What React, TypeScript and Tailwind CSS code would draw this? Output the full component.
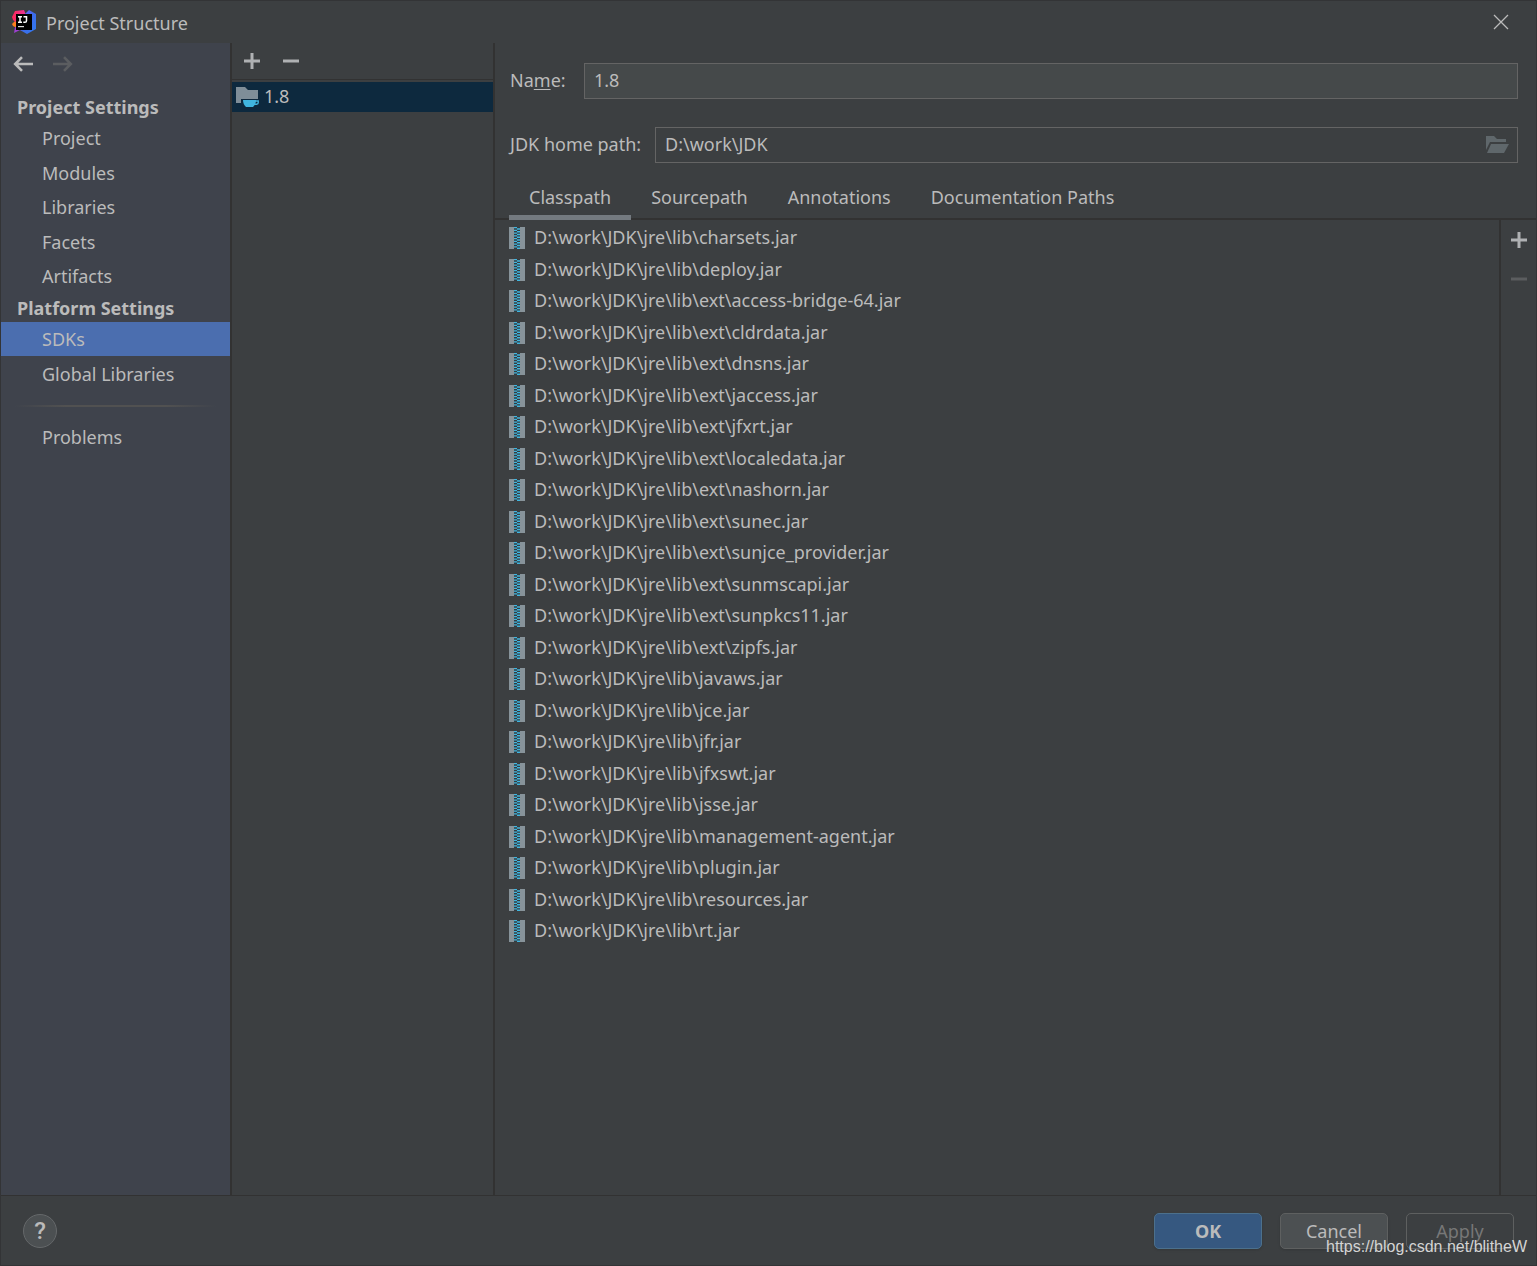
import type { InputHTMLAttributes } from "react";

const projectItems = ["Project", "Modules", "Libraries", "Facets", "Artifacts"];
const platformItems = ["SDKs", "Global Libraries"];
const tabs = ["Classpath", "Sourcepath", "Annotations", "Documentation Paths"];

const jars = [
  "charsets.jar",
  "deploy.jar",
  "ext\\access-bridge-64.jar",
  "ext\\cldrdata.jar",
  "ext\\dnsns.jar",
  "ext\\jaccess.jar",
  "ext\\jfxrt.jar",
  "ext\\localedata.jar",
  "ext\\nashorn.jar",
  "ext\\sunec.jar",
  "ext\\sunjce_provider.jar",
  "ext\\sunmscapi.jar",
  "ext\\sunpkcs11.jar",
  "ext\\zipfs.jar",
  "javaws.jar",
  "jce.jar",
  "jfr.jar",
  "jfxswt.jar",
  "jsse.jar",
  "management-agent.jar",
  "plugin.jar",
  "resources.jar",
  "rt.jar",
];

const Logo = () => (
  <svg className="size-6" viewBox="0 0 24 24" aria-hidden="true">
    <defs>
      <linearGradient id="logo-blue" x1="0" y1="0" x2="1" y2="1">
        <stop offset="0" stopColor="#7a5cff" />
        <stop offset="0.5" stopColor="#3d6bea" />
        <stop offset="1" stopColor="#2f7bf0" />
      </linearGradient>
      <linearGradient id="logo-pink" x1="0" y1="0" x2="1" y2="0">
        <stop offset="0" stopColor="#fe2857" />
        <stop offset="1" stopColor="#e8359a" />
      </linearGradient>
    </defs>
    <path d="M0 14l5-5v9l-4-2z" fill="#fc801d" />
    <path d="M3 17h8l3 5-6-2-6 3z" fill="#9d3fd0" />
    <path d="M3 1l9-1 2 5-9 8-4-3-1-3z" fill="url(#logo-pink)" />
    <path d="M13 4l4-4 7 4v15l-9 5-7-4z" fill="url(#logo-blue)" />
    <path d="M4 4h16v16H4z" fill="#000" />
    <path
      d="M6 6.700h4M8 6.700v5.600M6 12.300h4M11.500 6.700h3v4q0 1.600-1.600 1.600h-1.600"
      fill="none"
      stroke="#fff"
      strokeWidth="1.500"
    />
    <path d="M6 16h6v1.200H6z" fill="#ddd" />
  </svg>
);

const ArrowIcon = () => (
  <svg className="size-6" viewBox="0 0 24 24" fill="none" stroke="currentColor" strokeWidth="2.600">
    <path d="M22 12H4M11 5.200L4.200 12l6.800 6.800" />
  </svg>
);

const PlusIcon = () => (
  <svg className="size-4" viewBox="0 0 16 16" fill="currentColor">
    <path d="M6.500 0h3v6.500H16v3H9.500V16h-3V9.500H0v-3h6.500z" />
  </svg>
);

const MinusIcon = () => (
  <svg className="size-4" viewBox="0 0 16 16" fill="currentColor">
    <path d="M0 6.500h16v3H0z" />
  </svg>
);

const SdkIcon = () => (
  <svg className="size-6" viewBox="0 0 24 24" aria-hidden="true">
    <path d="M0 2h9l3 3h10v9H5v4H0z" fill="#7f8e98" />
    <path d="M7 15h13c0 3-1 5-3 7h-7c-2-2-3-4-3-7z" fill="#40b6e0" />
    <path d="M18 16h4.200v1.800q0 1.400-1.600 1.400H18" fill="none" stroke="#40b6e0" strokeWidth="1.400" />
  </svg>
);

const JarIcon = () => (
  <svg className="h-[22px] w-4 shrink-0" viewBox="0 0 16 22" aria-hidden="true">
    <path d="M0 0h5v22H0zM11 0h5v22h-5z" fill="#87939a" />
    <path d="M5 0h6v22H5z" fill="#353b3f" />
    <path d="M6.500 0v22" stroke="#40b6e0" strokeWidth="3" strokeDasharray="1.300 1.450" />
    <path
      d="M9.500 0v22"
      stroke="#40b6e0"
      strokeWidth="3"
      strokeDasharray="1.300 1.450"
      strokeDashoffset="1.400"
    />
  </svg>
);

const FolderIcon = () => (
  <svg className="h-[18px] w-6" viewBox="0 0 24 18" fill="currentColor">
    <path d="M0 0h8l3 3h9v3H4L0 14z" />
    <path d="M5 8h18l-5 9H1z" />
  </svg>
);

type SideItemProps = {
  label: string;
  active?: boolean;
};

const SideItem = ({ label, active }: SideItemProps) => (
  <li className="h-[34px] odd:h-[35px]">
    <a
      href="#"
      className={`flex h-[34px] items-center pl-[41px] ${active ? "bg-[#4b6eaf]" : ""}`}
    >
      {label}
    </a>
  </li>
);

type FieldProps = InputHTMLAttributes<HTMLInputElement>;

const Field = (props: FieldProps) => (
  <input
    type="text"
    className="h-9 w-full min-w-0 border border-[#646464] bg-[#45494a] px-[9px] pb-[2px] outline-none read-only:bg-[#3c3f41]"
    {...props}
  />
);

const App = () => {
  return (
    <div className="flex min-h-screen flex-col border border-[#333436] bg-[#3c3f41] font-['Noto_Sans',sans-serif] text-[18px] leading-6 text-[#bbbbbb]">
      <header className="flex h-[42px] items-center justify-between pr-[27px] pl-[11px]">
        <div className="flex items-center gap-[10px]">
          <Logo />
          <h1 className="pt-px">Project Structure</h1>
        </div>
        <button aria-label="Close">
          <svg className="size-4" viewBox="0 0 16 16" stroke="currentColor" strokeWidth="1.300">
            <path d="M1 1l14 14M15 1L1 15" />
          </svg>
        </button>
      </header>

      <main className="flex grow">
        <nav className="w-[229px] shrink-0 bg-[#3f434c]">
          <div className="flex h-[49px] items-start gap-4 pt-[9px] pl-[10px]">
            <button aria-label="Back">
              <ArrowIcon />
            </button>
            <button aria-label="Forward" disabled className="rotate-180 text-[#5b5d60]">
              <ArrowIcon />
            </button>
          </div>
          <h2 className="flex h-[29px] items-center pl-4 font-bold">Project Settings</h2>
          <ul>
            {projectItems.map((item) => (
              <SideItem key={item} label={item} />
            ))}
          </ul>
          <h2 className="flex h-7 items-center pl-4 font-bold">Platform Settings</h2>
          <ul>
            {platformItems.map((item) => (
              <SideItem key={item} label={item} active={item === "SDKs"} />
            ))}
          </ul>
          <hr className="mx-[14px] mt-[14px] mb-[13px] h-[2px] border-0 bg-[linear-gradient(90deg,transparent,#515151_25%,#515151_75%,transparent)]" />
          <ul>
            <SideItem label="Problems" />
          </ul>
        </nav>

        <section className="w-[265px] shrink-0 border-x-2 border-[#323232]">
          <div className="flex h-[37px] items-center gap-[23px] border-b border-[#323232] pl-3 text-[#afb1b3]">
            <button aria-label="Add SDK">
              <PlusIcon />
            </button>
            <button aria-label="Remove SDK">
              <MinusIcon />
            </button>
          </div>
          <ul className="pt-[2px]">
            <li className="flex h-[30px] items-center gap-1 bg-[#0d293e] pl-1">
              <SdkIcon />
              <span className="pb-[2px]">1.8</span>
            </li>
          </ul>
        </section>

        <section className="flex min-w-0 grow flex-col">
          <div className="flex flex-col gap-7 pt-5 pr-[18px] pl-[15px]">
            <div className="flex items-center">
              <label htmlFor="name" className="w-[74px] shrink-0 pb-[2px]">
                Na<span className="underline underline-offset-2">m</span>e:
              </label>
              <Field id="name" defaultValue="1.8" />
            </div>
            <div className="flex items-center">
              <label htmlFor="home" className="w-[145px] shrink-0 pb-[2px]">
                JDK home path:
              </label>
              <div className="relative grow">
                <Field id="home" readOnly value="D:\work\JDK" />
                <button
                  aria-label="Browse"
                  className="absolute inset-y-0 right-2 text-[#5f676b]"
                >
                  <FolderIcon />
                </button>
              </div>
            </div>
          </div>

          <div
            role="tablist"
            className="mt-[15px] flex h-[42px] border-b-2 border-[#323232] pl-[14px]"
          >
            {tabs.map((tab, index) => (
              <button
                key={tab}
                role="tab"
                aria-selected={index === 0}
                className={`-mb-[2px] border-b-5 px-5 ${
                  index === 0 ? "border-[#747a80]" : "border-transparent"
                }`}
              >
                {tab}
              </button>
            ))}
          </div>

          <div className="flex grow">
            <ul className="grow pt-[2px] pl-[14px]">
              {jars.map((jar) => (
                <li key={jar} className="flex h-8 items-center gap-[9px] even:h-[31px]">
                  <JarIcon />
                  <span className="pb-[2px]">{`D:\\work\\JDK\\jre\\lib\\${jar}`}</span>
                </li>
              ))}
            </ul>
            <div className="flex w-[37px] shrink-0 flex-col items-center gap-[23px] border-l-2 border-[#323232] pt-3 text-[#afb1b3]">
              <button aria-label="Add path">
                <PlusIcon />
              </button>
              <button aria-label="Remove path" disabled className="text-[#5b5d5f]">
                <MinusIcon />
              </button>
            </div>
          </div>
        </section>
      </main>

      <footer className="relative flex h-[70px] items-center justify-between border-t border-[#323232] pr-[22px] pl-[22px]">
        <button
          aria-label="Help"
          className="size-[34px] rounded-full border border-[#65686a] bg-[#4c5052] font-['Roboto',sans-serif] text-[24px] font-medium"
        >
          ?
        </button>
        <div className="flex gap-[18px]">
          <button className="h-9 w-[108px] rounded-[5px] border border-[#4c708c] bg-[#365880] pt-px font-bold shadow-sm">
            OK
          </button>
          <button className="h-9 w-[108px] rounded-[5px] border border-[#5e6060] bg-[#4c5052] pt-px shadow-sm">
            Cancel
          </button>
          <button
            disabled
            className="h-9 w-[108px] rounded-[5px] border border-[#5e6060] pt-px text-[#777777]"
          >
            Apply
          </button>
        </div>
        <span className="absolute right-[9px] bottom-[6px] font-['Liberation_Sans',sans-serif] text-base text-[#d4d4d4]">
          https://blog.csdn.net/blitheW
        </span>
      </footer>
    </div>
  );
};

export default App;
